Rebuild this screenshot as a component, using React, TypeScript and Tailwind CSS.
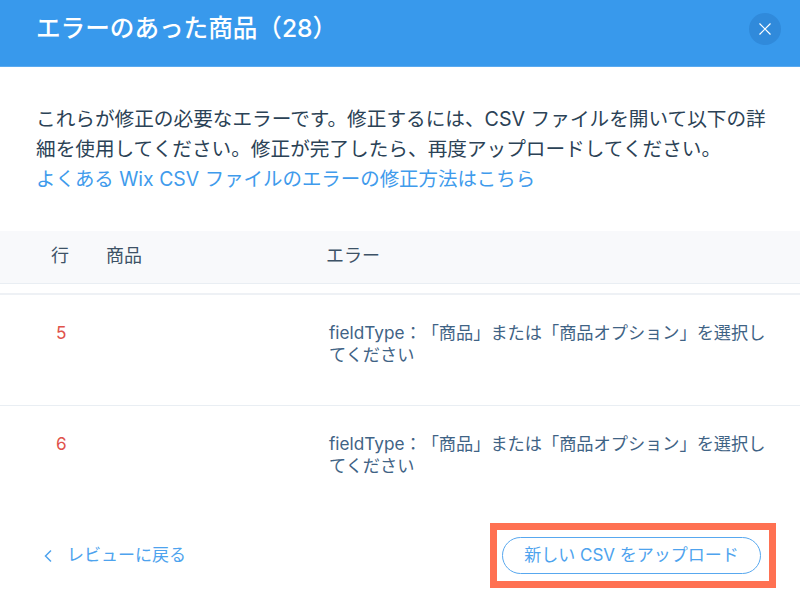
const font = "font-['Inter','Noto_Sans_CJK_JP',sans-serif] [text-spacing-trim:space-all]"

const rows = [
  { line: 5, error: 'fieldType：「商品」または「商品オプション」を選択してください', last: false },
  { line: 6, error: 'fieldType：「商品」または「商品オプション」を選択してください', last: true },
]

function ErrorRow({ line, error, last }: { line: number; error: string; last: boolean }) {
  return (
    <div className={`flex h-[111px] pt-[27px] text-[17.2px] leading-[22px] ${last ? '' : 'border-b border-[#e9eef3]'}`}>
      <div className="w-[121px] pl-[56px] text-[#e0524b]">{line}</div>
      <div className="w-[208px]" />
      <div className="w-[440px] text-[#3f6385]">{error}</div>
    </div>
  )
}

export default function App() {
  return (
    <div className={`${font} h-[606px] w-[800px] overflow-hidden bg-white`}>
      <header className="flex h-[67px] items-start justify-between border-b border-[#5aaaf0] bg-[#3899ec] pl-[36px] pr-[19px]">
        <h1 className="pt-[11px] text-[24.6px] leading-[34px] font-medium text-white">エラーのあった商品（28）</h1>
        <button className="mt-[13px] flex h-[32px] w-[32px] items-center justify-center rounded-full bg-[#308adb]">
          <svg width="14" height="14" viewBox="0 0 14 14" fill="none" stroke="white" strokeWidth="1.2">
            <path d="M1.5 1.5 12.5 12.5M12.5 1.5 1.5 12.5" />
          </svg>
        </button>
      </header>

      <div className="h-[164px] pl-[36px] pr-[30px] pt-[37px] text-[19.65px] leading-[30px] text-[#2b4256]">
        <p>これらが修正の必要なエラーです。修正するには、CSV ファイルを開いて以下の詳細を使用してください。修正が完了したら、再度アップロードしてください。</p>
        <a className="text-[19.45px] text-[#3f9bec]">よくある Wix CSV ファイルのエラーの修正方法はこちら</a>
      </div>

      <div className="flex h-[53px] items-center border-b border-[#e9eef3] bg-[#f8f9fb] pb-[3px] text-[18px] text-[#3d5266]">
        <div className="w-[106px] pl-[51px]">行</div>
        <div className="w-[220px]">商品</div>
        <div>エラー</div>
      </div>
      <div className="h-[11px] border-b-2 border-[#eef1f5]" />

      {rows.map((row) => (
        <ErrorRow key={row.line} line={row.line} error={row.error} last={row.last} />
      ))}

      <footer className="flex items-center justify-between pt-[6px] pl-[43px] pr-[24px]">
        <a className="flex items-center text-[17px] text-[#4ea3ee]">
          <svg width="10" height="14" viewBox="0 0 10 14" fill="none" stroke="#4ea3ee" strokeWidth="1.5">
            <path d="M8 1.5 2.5 7 8 12.5" />
          </svg>
          <span className="ml-[14px]">レビューに戻る</span>
        </a>
        <div className="border-[7px] border-[#ff7152] py-[7px] pl-[5px] pr-[8px]">
          <button className="block h-[37px] w-[259px] rounded-full border-[1.5px] border-[#58a8ef] text-[17px] text-[#4ea3ee]">
            新しい CSV をアップロード
          </button>
        </div>
      </footer>
    </div>
  )
}
